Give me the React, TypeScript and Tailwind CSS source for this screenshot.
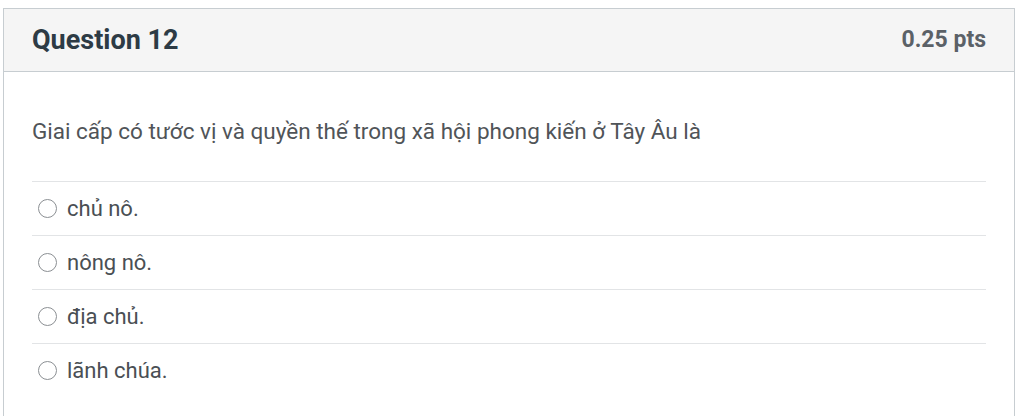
import React from 'react';

const ANSWERS = ["chủ nô.", "nông nô.", "địa chủ.", "lãnh chúa."];

export default function App() {
  return (
    <div className="w-[1024px] h-[416px] overflow-hidden bg-white pt-[8px] pl-[3px] font-['Roboto','Liberation_Sans',sans-serif]">
      <div className="w-[1012px] border border-[#c7cdd1] h-[420px]">
        {/* header */}
        <div className="h-[63px] bg-[#f5f5f5] border-b border-[#c7cdd1] px-[28px] flex items-center justify-between">
          <h2 className="text-[27px] font-bold text-[#2d3b45]">Question 12</h2>
          <span className="text-[23px] font-bold text-[#5b6167]">0.25 pts</span>
        </div>

        <div className="px-[28px] pt-[45px]">
          <p className="text-[22.5px] leading-[28px] text-[#505458]">
            Giai cấp có tước vị và quyền thế trong xã hội phong kiến ở Tây Âu là
          </p>
          <div className="mt-[36px]">
            {ANSWERS.map((a) => (
              <label key={a} className="h-[54px] border-t border-[#e2e4e6] flex items-center gap-[10px] pl-[6px]">
                <span className="w-[19px] h-[19px] rounded-full border border-[#8b8f93] bg-white shrink-0" />
                <span className="text-[22px] text-[#4a4f54]">{a}</span>
              </label>
            ))}
          </div>
        </div>
      </div>
    </div>
  );
}
